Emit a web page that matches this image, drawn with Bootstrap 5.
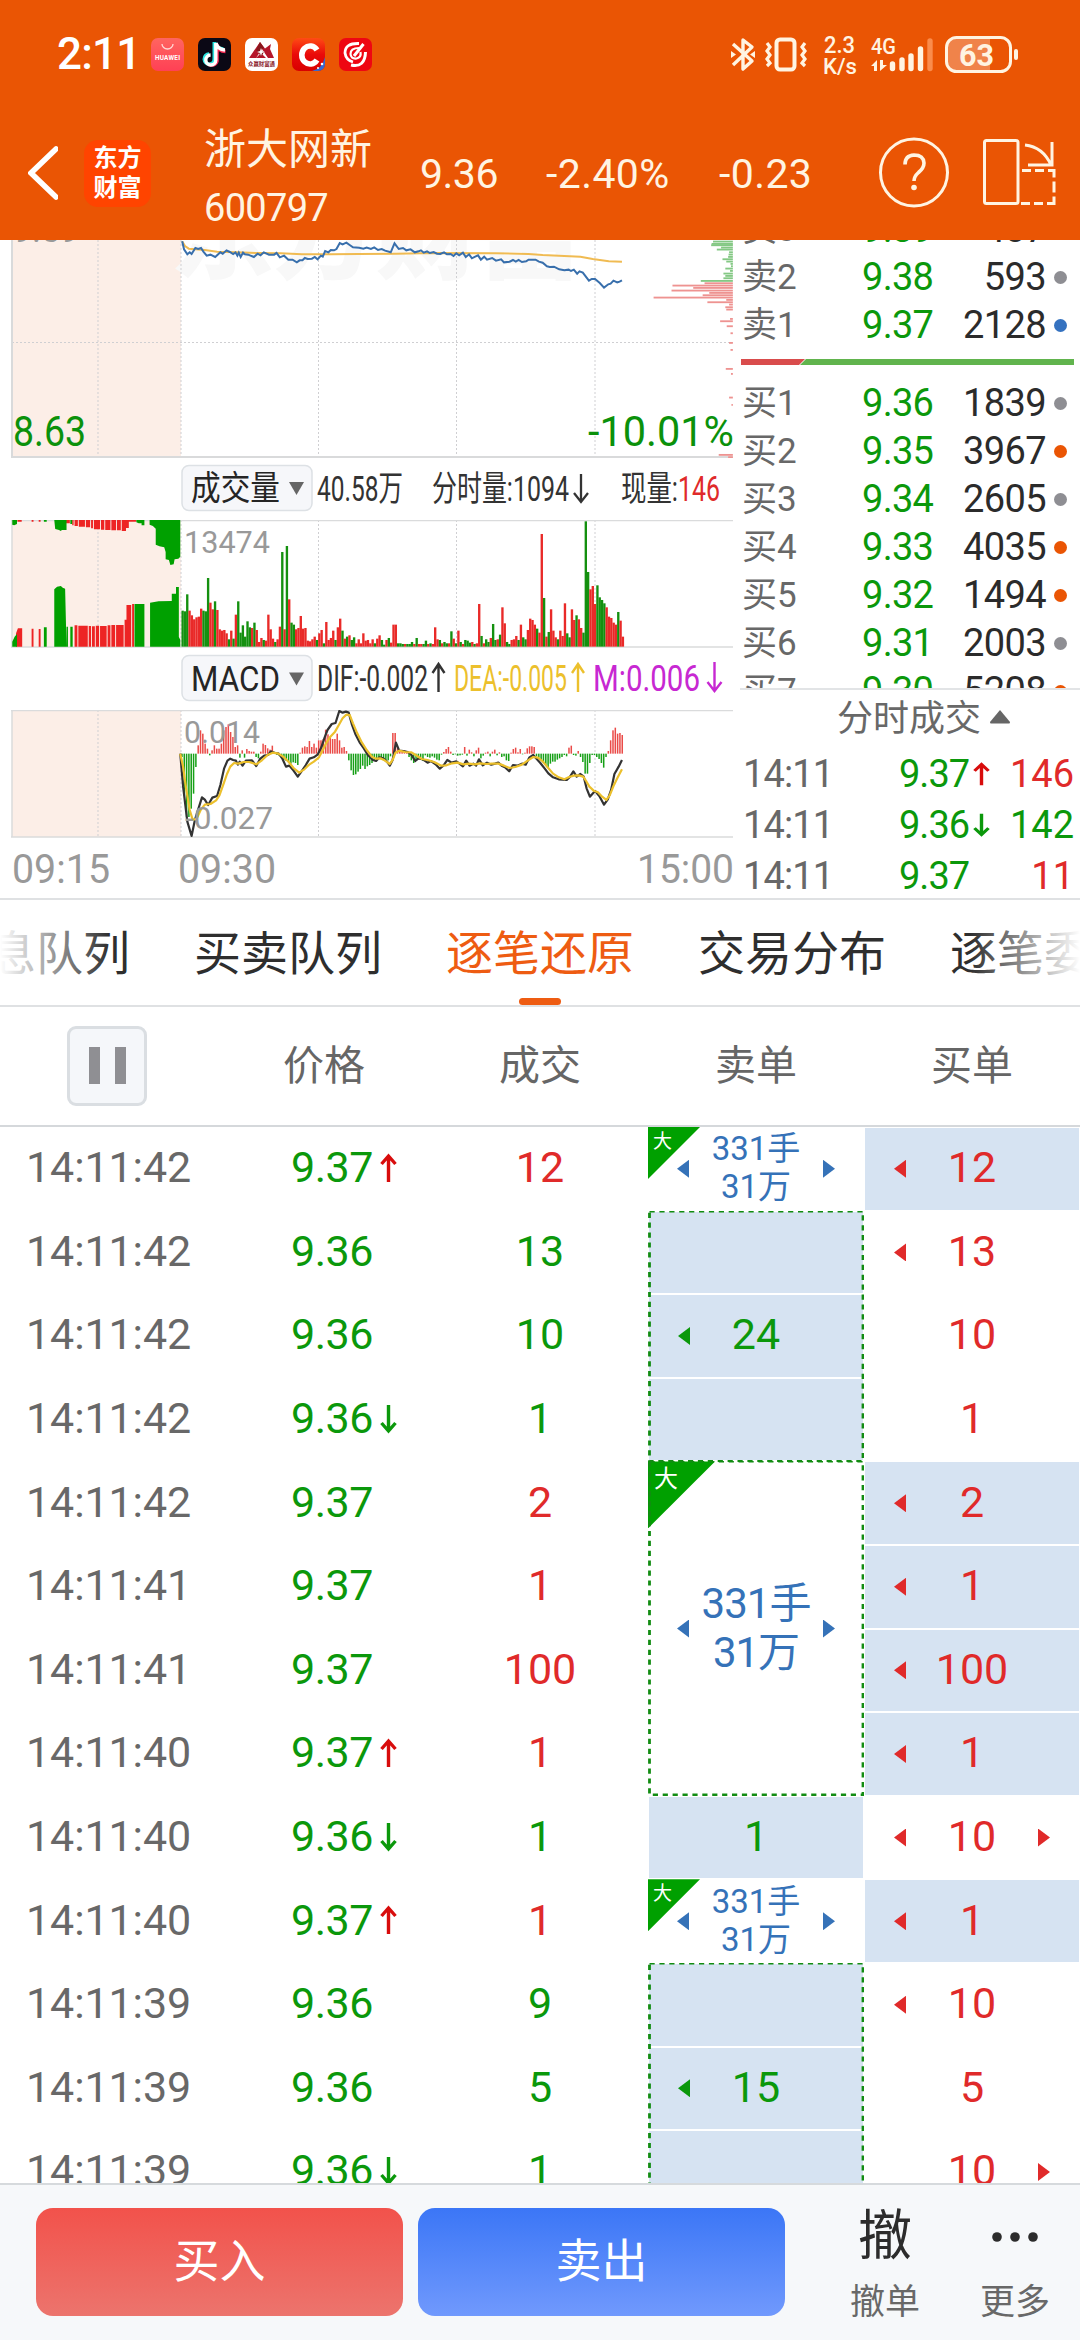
<!DOCTYPE html>
<html lang="zh-CN">
<head>
<meta charset="utf-8">
<meta name="viewport" content="width=device-width, initial-scale=1">
<title>浙大网新 600797</title>
<link rel="stylesheet" href="https://cdn.jsdelivr.net/npm/bootstrap@5.3.0/dist/css/bootstrap.min.css">
<style>
  :root { --orange:#ea5504; --up:#e02a2a; --down:#0b980b; --blue:#3572b8; --cell:#d6e3f2; --cream:#fff4e2; }
  body { font-family: Roboto, "Noto Sans CJK SC", sans-serif; width:1080px; height:2340px; overflow:hidden; color:#2b2b2b; background:#fff; line-height:1; }
  svg { display:block; flex:none; }
  .c-up { color:var(--up); } .c-down { color:var(--down); }
  .top-area { background:var(--orange); height:240px; color:var(--cream); }
  .status-row { height:108px; padding:0 0 0 57px; }
  .clock { font-size:44px; font-weight:500; color:#fff; width:94px; letter-spacing:-.8px; }
  .title-row { height:132px; padding-left:28px; }
  .brand-tile { width:67px; height:67px; border-radius:14px; background:#ff4400; color:#fff; font-size:24px; font-weight:700; line-height:30px; margin-left:26px; padding-top:3px; text-align:center; flex:none; margin-top:-2px; }
  .stock-name { width:216px; margin-left:53px; padding-top:3px; }
  .stock-name .zh { font-size:42px; line-height:56px; }
  .stock-name .code { font-size:38px; line-height:42px; letter-spacing:-.7px; margin-top:9px; }
  .quote { font-size:41px; letter-spacing:-.5px; flex:none; }
  .quote.signed { letter-spacing:.4px; }
  .market { height:660px; border-bottom:2px solid #dfe1e3; overflow:hidden; }
  .charts { width:740px; flex:none; }
  .side { width:340px; }
  .book { height:450px; overflow:hidden; border-bottom:2px solid #e2e4e6; }
  .book .first { margin-top:-35px; }
  .book-row { height:48px; padding:0 13px 0 2px; font-size:38px; }
  .book-row .lbl { font-size:35px; color:#686868; width:101px; }
  .book-row .prc { width:90px; text-align:right; letter-spacing:-.8px; }
  .book-row .qty { flex:1; text-align:right; letter-spacing:-.6px; }
  .spot { width:13px; height:13px; border-radius:50%; margin-left:8px; }
  .depth-bar { height:30px; padding:10px 6px 0 1px; }
  .ticks-head { height:58px; font-size:36px; color:#686868; padding-left:97px; }
  .tick-row { height:51px; font-size:38px; padding:0 6px 0 3px; }
  .tick-row .tm { color:#686868; width:156px; letter-spacing:-.9px; }
  .tick-row .prc { width:70px; letter-spacing:-1px; }
  .tabs { height:107px; border-bottom:2px solid #dfe1e3; gap:64px; margin:0; padding-left:0; overflow:hidden; position:relative; }
  .tabs .nav-link { padding:0; font-size:47px; line-height:107px; height:105px; color:#2e2e2e; white-space:nowrap; flex:none; position:relative; }
  .tabs .nav-link.active { color:#ee5c12; }
  .tabs .nav-link.active::after { content:""; position:absolute; left:50%; bottom:0; width:42px; height:7px; margin-left:-21px; border-radius:4px; background:#ee5c12; }
  .tabs .lead-tab { margin-left:-11px; }
  .fade-l, .fade-r { position:absolute; top:0; bottom:0; width:110px; pointer-events:none; }
  .fade-l { left:0; background:linear-gradient(90deg,#fff 0,rgba(255,255,255,0) 100%); }
  .fade-r { right:0; background:linear-gradient(270deg,#fff 0,rgba(255,255,255,0) 100%); }
  .cols-head { height:120px; border-bottom:2px solid #d5d8db; font-size:41px; color:#666; }
  .cols-head > div { width:216px; }
  .pause { width:80px; height:80px; border:3px solid #dadee2; border-radius:9px; background:#f5f7fa; margin-left:67px; gap:15px; margin-top:-1px; }
  .pause i { width:11px; height:37px; background:#8f8f93; }
  .ledger { height:1056px; overflow:hidden; font-size:43px; }
  .ledger > div { flex:none; }
  .deal { height:83.6px; padding-bottom:2px; }
  .deal .tm { width:291px; padding-left:26px; color:#686868; letter-spacing:-.1px; }
  .deal .prc { width:141px; letter-spacing:-.5px; }
  .deal .vol { width:216px; text-align:center; }
  .col-sell { width:216px; } .col-buy { width:216px; }
  .slot { height:83.6px; position:relative; border:1px solid #fff; padding-bottom:2px; }
  .slot.fill { background:var(--cell); background-clip:padding-box; }
  .group { position:relative; }
  .group > svg.dash { position:absolute; left:0; top:0; }
  .tri-l, .tri-r { position:absolute; top:50%; margin-top:-9px; width:12px; height:18px; background:currentColor; }
  .tri-l { left:29px; clip-path:polygon(100% 0,0 50%,100% 100%); }
  .tri-r { right:29px; clip-path:polygon(0 0,100% 50%,0 100%); }
  .big-order { color:var(--blue); position:relative; text-align:center; }
  .big-order.sm { height:83.6px; font-size:33px; line-height:38px; padding-bottom:1px; }
  .big-order.lg { height:334.4px; font-size:42px; line-height:49px; letter-spacing:-1px; padding-bottom:2px; }
  .corner { position:absolute; left:0; top:0; background:#00a000; color:#fff; clip-path:polygon(0 0,100% 0,0 100%); text-align:left; }
  .sm .corner { width:52px; height:52px; font-size:19px; line-height:19px; padding:5px 0 0 5px; }
  .lg .corner { width:67px; height:67px; font-size:24px; line-height:24px; padding:6px 0 0 6px; }
  .actions { height:157px; background:#f6f8fa; border-top:2px solid #d6dadd; padding:0 0 0 36px; }
  .trade-btn { width:367px; height:108px; border:0; border-radius:17px; font-size:46px; color:#fff; flex:none; margin-top:-2px; }
  .btn-buy { background:linear-gradient(#f2524b,#ec746d); margin-right:15px; }
  .btn-sell { background:linear-gradient(#3b76f6,#7099fd); }
  .mini { width:130px; font-size:35px; color:#686868; }
  .mini .glyph { height:62px; font-size:54px; color:#2c2c2c; margin-bottom:17px; }
</style>
</head>
<body>
<header class="top-area">
  <div class="status-row d-flex align-items-center">
    <div class="clock">2:11</div>
    <svg width="222" height="33" viewBox="0 0 222 33">
      <defs><linearGradient id="hw" x2="0" y2="1"><stop stop-color="#ff6560"/><stop offset="1" stop-color="#ff4055"/></linearGradient>
      <linearGradient id="cc" x2="0" y2="1"><stop stop-color="#ff4b14"/><stop offset=".5" stop-color="#ea0a0a"/><stop offset="1" stop-color="#d80000"/></linearGradient></defs>
      <rect width="33" height="33" rx="7" fill="url(#hw)"/><path d="M11 6a5.5 5 0 0 0 11 0" fill="none" stroke="#ffd9d4" stroke-width="1.3"/>
      <text x="4" y="21.5" font-size="6.4" font-weight="700" fill="#fff" textLength="25">HUAWEI</text>
      <g transform="translate(47)"><rect width="33" height="33" rx="7" fill="#0b0815"/>
        <g fill="none" stroke-width="3.600"><path d="M16.300 4v17a5 5 0 1 1-5.200-5M17 5q1.500 6 8.500 6" stroke="#2be3e0"/><path d="M19 6v17a5.500 5.500 0 0 1-8.500 3M19 7q1.500 6 8.500 6.500" stroke="#f72c55"/><path d="M17.800 5v17a5 5 0 1 1-5.200-5M18 5q1.500 6.500 9 7" stroke="#fff" stroke-width="3.400"/></g></g>
      <g transform="translate(94)"><rect width="33" height="33" rx="7" fill="#fff"/><path d="M4 20 15 4l5 6.500 6-4.500-1 5 4 9h-6l-6-9-6 9zM11 20l5-5 5 5z" fill="#b5162b"/><path d="m11 12 4-8 4 6-3 2 3 2-3 5-2-4z" fill="#88171d"/><path d="m12 14 3-1 1-3 1 3 3 1-3 1-1 3-1-3z" fill="#fff"/>
        <text x="3" y="28" font-size="6" font-weight="700" fill="#8c2430" textLength="27" lengthAdjust="spacingAndGlyphs">众赢财富通</text></g>
      <g transform="translate(141)"><clipPath id="r4"><rect width="33" height="33" rx="7"/></clipPath><g clip-path="url(#r4)"><rect width="33" height="33" fill="url(#cc)"/><path d="M20 33Q30 31 33 19v14z" fill="#3568cf"/></g><path d="M25 12A8.300 9 0 1 0 25 22" fill="none" stroke="#fff" stroke-width="5.600"/><circle cx="30" cy="26" r="1.300" fill="#fff"/><circle cx="26" cy="30" r="1" fill="#fff"/></g>
      <g transform="translate(188)"><rect width="33" height="33" rx="7" fill="#ee0612"/><g fill="none" stroke="#fff"><path d="M20 5.500Q6 5 6 15q1 7 8 9" stroke-width="2.800"/><path d="M20 10q-8.500 0-8.500 6 .5 5 6 4.500 5-1 4-6.500" stroke-width="2.200"/><path d="m24.500 6-9.500 12M12 27q14 3 14.500-13" stroke-width="3"/></g></g>
    </svg>
    <svg class="ms-auto" width="352" height="50" viewBox="728 28 352 50" fill="none" stroke="var(--cream)">
      <path d="m733 43 19 17-9 8V39l9 7-19 18" stroke-width="3.400" stroke-linejoin="round"/><path d="m731 50 5 3.500-5 3.500zM755 50l-5 3.500 5 3.500z" fill="var(--cream)" stroke="none"/>
      <rect x="776.500" y="38.500" width="18" height="30" rx="3.500" stroke-width="4"/><path d="m767 42 3 4-3 4 3 4-3 4 3 4-3 3M805 42l-3 4 3 4-3 4 3 4-3 4 3 3" stroke-width="3.200"/>
      <g fill="var(--cream)" stroke="none" font-weight="500"><text x="824" y="52" font-size="24" textLength="31" lengthAdjust="spacingAndGlyphs">2.3</text><text x="823" y="73" font-size="22" textLength="34" lengthAdjust="spacingAndGlyphs">K/s</text><text x="871" y="52.500" font-size="22" textLength="25" lengthAdjust="spacingAndGlyphs">4G</text>
      <path d="m871 65 6-6v11h-3v-5zM880 59h3v5h4l-7 6z"/></g>
      <g stroke-width="5.400" stroke-linecap="round"><path d="M892.500 63v4.500M902 59v8.500M911 55v12.500M920.500 48v19.500"/><path d="M930 40v27.500" stroke="#fa8c4c"/></g>
      <rect x="947" y="37.500" width="42" height="32" rx="9" fill="#f0834a" stroke="none"/><path d="M980 38h10v31h-10z" fill="#f0834a" stroke="none"/><rect x="946.500" y="36.500" width="64" height="34" rx="10" stroke-width="3"/><path d="M1016 50v7" stroke-width="4" stroke-linecap="round"/>
      <text x="959" y="64.500" font-size="32" font-weight="700" fill="var(--cream)" stroke="none" textLength="35" lengthAdjust="spacingAndGlyphs">63</text>
    </svg>
  </div>
  <div class="title-row d-flex align-items-center">
    <svg width="30" height="56" viewBox="0 0 30 56"><path d="M28 3 3 27l25 24" fill="none" stroke="#fff" stroke-width="5.500" stroke-linecap="round"/></svg>
    <div class="brand-tile">东方<br>财富</div>
    <div class="stock-name"><div class="zh">浙大网新</div><div class="code">600797</div></div>
    <div class="quote" style="width:126px">9.36</div><div class="quote signed" style="width:173px">-2.40%</div><div class="quote signed" style="width:159px">-0.23</div>
    <svg width="180" height="76" viewBox="877 136 180 76" fill="none" stroke="var(--cream)" stroke-width="3">
      <circle cx="913" cy="172.500" r="33.500"/><path d="M904 164.500q0-9 9-9.500 9.500 0 10 8 0 5-5.500 9.500-4.500 4-4.500 8.500" stroke-width="3.600"/><circle cx="913" cy="187.500" r="2.800" fill="var(--cream)" stroke="none"/>
      <rect x="983.500" y="140.500" width="33.500" height="63" rx="2"/><path d="M1024 145q18 2 26 20M1051 142v23h-24"/><path d="M1021 170.500h9m4 0h9m4 0h6v7m0 4v11m0 4v7h-7m-4 0h-9m-4 0h-9"/>
    </svg>
  </div>
</header>

<main>
  <section class="market d-flex">
    <div class="charts d-flex flex-column">
      <svg width="740" height="218" viewBox="0 240 740 218">
        <path d="M12 240h169v217H12z" fill="#fceee7"/>
        <text x="170" y="271" font-size="104" font-weight="900" fill="#f8f8f8" textLength="412">东方财富</text>
        <g stroke="#cfcfd2" stroke-width="1" stroke-dasharray="2 2"><path d="M98 240v217M181 240v217M318.500 240v217M456.500 240v217M595 240v217M12 342.500h721"/></g>
        <path d="M12 240v217M11 457h722" stroke="#d9dadb" stroke-width="2" fill="none"/>
        <text x="13" y="241.500" font-size="34" fill="#999" textLength="66" lengthAdjust="spacingAndGlyphs">9.59</text>
        <g transform="translate(0 230) scale(.4719 .3333)" fill="none" stroke-width="2">
          <polyline vector-effect="non-scaling-stroke" stroke="#f0bb52" points="386,34 392,48 400,56 414,58 434,60 460,65 500,67 545,69 595,70 640,73 700,73 760,72 840,71 920,69 1050,70 1120,72 1150,75 1230,80 1256,87 1290,94 1318,95"/>
          <polyline vector-effect="non-scaling-stroke" stroke="#386fac" points="386,34 390,58 397,73 402,67 406,72 414,54 420,57 426,54 431,65 438,77 446,74 456,81 467,67 472,71 480,61 487,66 494,72 499,67 503,77 506,68 510,81 515,68 519,73 526,74 538,81 546,71 552,76 559,67 570,74 581,74 586,69 593,82 602,77 611,89 620,89 629,97 635,91 641,91 646,84 652,87 661,86 667,81 673,88 680,77 684,80 689,63 696,67 701,60 708,61 713,57 720,39 726,43 734,38 741,45 748,52 761,53 770,56 777,53 786,57 793,52 801,60 809,57 816,62 828,67 836,40 845,57 854,54 861,61 870,58 879,67 887,64 892,61 898,68 905,64 911,69 919,66 926,71 933,72 941,67 947,73 955,72 961,78 967,70 973,76 981,68 987,81 994,73 1000,85 1007,80 1013,76 1019,89 1026,80 1032,89 1043,84 1051,92 1062,88 1068,97 1080,95 1087,90 1093,95 1099,90 1106,96 1115,94 1120,89 1135,89 1142,95 1150,98 1159,109 1165,111 1174,110 1185,118 1196,121 1205,119 1210,123 1216,119 1223,131 1228,124 1235,128 1248,152 1254,147 1261,147 1271,159 1280,173 1289,163 1294,161 1300,152 1308,157 1313,155 1318,151"/>
        </g>
        <g id="dist" transform="translate(0 230) scale(.4719 .3333)"></g>
        <g fill="#0b910b" font-size="42"><text x="13" y="446" textLength="73" lengthAdjust="spacingAndGlyphs">8.63</text><text x="588" y="446" textLength="146" lengthAdjust="spacingAndGlyphs">-10.01%</text></g>
      </svg>
      <svg width="740" height="62" viewBox="0 458 740 62">
        <rect x="182" y="465.500" width="130" height="45" rx="7" fill="#f6f7fa" stroke="#dde1e5" stroke-width="1.500"/>
        <text x="191" y="500" font-size="34" fill="#252525" textLength="89" lengthAdjust="spacingAndGlyphs">成交量</text><path d="M289 482h15l-7.500 13z" fill="#666"/>
        <g font-size="35" fill="#333"><text x="317" y="500.500" textLength="86" lengthAdjust="spacingAndGlyphs">40.58万</text><text x="432" y="500.500" textLength="137" lengthAdjust="spacingAndGlyphs">分时量:1094</text><text x="621" y="500.500" textLength="57" lengthAdjust="spacingAndGlyphs">现量:</text><text x="678" y="500.500" fill="#e02a2a" textLength="42" lengthAdjust="spacingAndGlyphs">146</text></g>
        <path d="M581 474v28m-7-9 7 9 7-9" fill="none" stroke="#333" stroke-width="2.300"/>
      </svg>
      <svg width="740" height="128" viewBox="0 520 740 128">
        <path d="M12 520h169v127H12z" fill="#fceee7"/>
        <path d="M98 520v127M181 520v127M318.500 520v127M456.500 520v127M595 520v127" stroke="#cfcfd2" stroke-dasharray="2 2"/>
        <path d="M12 520v127M11 520.500h722M11 647h722" stroke="#dadbdc" stroke-width="1.500" fill="none"/>
        <text x="184" y="553" font-size="31" fill="#999" textLength="86" lengthAdjust="spacingAndGlyphs">13474</text>
        <g transform="translate(0 460) scale(.4719 .3333)">
          <path fill="#ed2424" d="M37 180h9v5h-9zM67 180h4v5h-4zM82 180h4v5h-4zM140 180h8v10h-8zM153 180h3v16h-3zM158 180h7v18h-7zM167 180h13v20h-13zM182 180h9v22h-9zM193 180h4v25h-4zM199 180h13v28h-13zM214 180h7v29h-7zM223 180h11v30h-11zM236 180h10v31h-10zM248 180h8v31h-8zM258 180h9v33h-9zM267 180h6v24h-6zM273 180h16v5h-16zM34 560v-40l4-15h9v55zM67 560v-54h4v54zM82 560v-53h4v53zM158 560v-64h6v64zM166 560v-63h20v63zM188 560v-62h5v62zM195 560v-61h6v61zM203 560v-63h7v63zM212 560v-62h14v62zM228 560v-64h6v64zM236 560v-65h8v65zM246 560v-65h16v65zM264 560v-81h4v-44h10v125zM280 560v-128h4v128z"/>
          <path fill="#00a000" d="M26 180h10v12l-6 4-4-2zM93 180h6v5h-6zM115 180h26v30h-10l-2 3-4-3-8-3zM149 180h4v12h-4zM289 180h11v10h-6l-5-3zM300 180h6v16h-6zM317 180h65v110l-4 6-8 2-2 15-7 2-3-15-7-2v-22l-3-14-10-3-8-5v-48l-6-8-7-4zM26 560v-15l5-15 5-8v38zM93 560v-58h6v58zM115 560v-172l6-8 8-2 4 5 5 3 3 174zM149 560v-60h5v60zM141 560v-60h3v60zM285 560v-128h21v128zM318 560v-132l18-4 28-1v-22h9v-20h6v150l3 8v21z"/>
          <g id="volbars"></g>
        </g>
      </svg>
      <svg width="740" height="62" viewBox="0 648 740 62">
        <rect x="182" y="655.500" width="130" height="45" rx="7" fill="#f6f7fa" stroke="#dde1e5" stroke-width="1.500"/>
        <text x="191" y="691" font-size="35.500" fill="#252525" textLength="89" lengthAdjust="spacingAndGlyphs">MACD</text><path d="M289 672.500h15l-7.500 13z" fill="#666"/>
        <g font-size="36"><text x="317" y="691" fill="#333" textLength="111" lengthAdjust="spacingAndGlyphs">DIF:-0.002</text><text x="454" y="691" fill="#ecc02c" textLength="113" lengthAdjust="spacingAndGlyphs">DEA:-0.005</text><text x="593" y="691" fill="#c728d2" textLength="107" lengthAdjust="spacingAndGlyphs">M:0.006</text></g>
        <g fill="none" stroke-width="2.400"><path d="M438.500 692v-28m-6 9 6-9 6 9" stroke="#333"/><path d="M578 692v-28m-6 9 6-9 6 9" stroke="#ecc02c"/><path d="M714.500 662v29m-7-9 7 9 7-9" stroke="#c728d2"/></g>
      </svg>
      <svg width="740" height="128" viewBox="0 710 740 128">
        <path d="M12 710h169v127H12z" fill="#fceee7"/>
        <path d="M98 710v127M181 710v127M318.500 710v127M456.500 710v127M595 710v127" stroke="#cfcfd2" stroke-dasharray="2 2"/>
        <path d="M12 710v127M11 710.500h722M11 837h722" stroke="#dadbdc" stroke-width="1.500" fill="none"/>
        <g transform="translate(0 650) scale(.4719 .3333)"><g id="macdbars"></g>
          <g fill="none" stroke-width="2.200" stroke-linejoin="round">
          <polyline vector-effect="non-scaling-stroke" stroke="#333" points="382,311 388,410 397,515 406,558 413,510 420,478 428,442 434,449 441,465 450,443 460,438 467,405 475,355 482,332 488,326 494,330 500,332 504,344 508,335 514,347 521,332 534,331 543,348 551,327 560,317 568,315 574,304 583,309 590,310 598,325 606,350 613,347 622,362 631,380 639,364 648,345 656,326 665,322 673,314 681,292 688,262 694,240 703,222 711,219 719,183 726,188 733,185 739,188 746,225 753,252 762,277 771,295 780,316 790,330 797,333 804,322 812,325 820,335 826,347 832,330 839,278 846,302 855,303 864,306 872,315 880,333 887,325 896,328 906,338 913,333 923,343 932,356 940,346 948,330 957,338 967,334 973,340 981,349 988,332 995,347 1003,341 1009,347 1015,328 1023,346 1032,338 1041,344 1049,341 1056,338 1063,347 1070,352 1079,364 1087,345 1096,347 1106,341 1114,344 1122,322 1130,315 1136,325 1145,339 1154,355 1162,370 1172,382 1184,388 1201,390 1207,382 1215,364 1222,380 1230,372 1237,380 1243,415 1250,440 1261,423 1270,438 1280,464 1288,448 1295,420 1302,372 1311,350 1318,330"/>
          <polyline vector-effect="non-scaling-stroke" stroke="#ecc02c" points="382,311 388,350 394,412 402,480 408,508 416,508 426,478 434,464 446,462 458,451 465,436 473,405 481,372 488,350 496,339 505,341 516,336 528,336 543,343 555,331 567,315 578,308 590,311 600,320 612,336 622,354 634,368 645,358 656,343 665,335 676,322 683,303 691,280 700,260 710,245 718,225 726,205 734,194 741,195 748,220 757,250 767,278 777,300 788,320 797,326 806,325 815,331 826,342 832,330 838,308 846,302 858,306 872,307 884,318 894,327 906,330 920,336 935,347 946,346 958,340 970,338 982,343 994,341 1006,343 1018,340 1030,342 1042,341 1056,341 1068,347 1080,354 1092,351 1106,344 1118,332 1130,321 1140,323 1150,334 1160,351 1172,371 1184,382 1196,388 1206,381 1216,377 1226,376 1236,380 1242,393 1249,410 1258,422 1267,427 1276,440 1285,450 1292,436 1300,408 1308,385 1318,358"/></g>
        </g>
        <g font-size="31" fill="#999"><text x="184" y="743" textLength="76" lengthAdjust="spacingAndGlyphs">0.014</text><text x="185" y="829" textLength="88" lengthAdjust="spacingAndGlyphs">-0.027</text></g>
      </svg>
      <svg width="740" height="60" viewBox="0 838 740 60"><g font-size="40" fill="#999"><text x="12" y="882.500" textLength="98" lengthAdjust="spacingAndGlyphs">09:15</text><text x="178" y="882.500" textLength="98" lengthAdjust="spacingAndGlyphs">09:30</text><text x="637" y="882.500" textLength="97" lengthAdjust="spacingAndGlyphs">15:00</text></g></svg>
    </div>
    <aside class="side">
      <div class="book" id="book"></div>
      <div class="ticks-head d-flex align-items-center">分时成交<svg class="ms-2 mb-1" width="22" height="16" viewBox="0 0 22 16"><path d="M11 1 21 13q0 1.500-1 1.500H2Q1 14.500 1 13z" fill="#666"/></svg></div>
      <div id="ticks"></div>
    </aside>
  </section>

  <nav class="tabs nav flex-nowrap">
    <a class="nav-link lead-tab">息队列</a><a class="nav-link">买卖队列</a><a class="nav-link active">逐笔还原</a><a class="nav-link">交易分布</a><a class="nav-link">逐笔委托</a>
    <span class="fade-l"></span><span class="fade-r"></span>
  </nav>
  <div class="cols-head d-flex align-items-center text-center">
    <div><div class="pause d-flex align-items-center justify-content-center"><i></i><i></i></div></div>
    <div>价格</div><div>成交</div><div>卖单</div><div>买单</div>
  </div>
  <section class="ledger d-flex">
    <div id="deals"></div>
    <div class="col-sell" id="sells"></div>
    <div class="col-buy" id="buys"></div>
  </section>
</main>
<footer class="actions d-flex align-items-center">
  <button class="btn trade-btn btn-buy">买入</button><button class="btn trade-btn btn-sell">卖出</button>
  <div class="mini text-center ms-auto"><div class="glyph d-flex align-items-center justify-content-center">撤</div>撤单</div>
  <div class="mini text-center"><div class="glyph d-flex align-items-center justify-content-center"><svg width="50" height="14" viewBox="0 0 50 14" fill="#2c2c2c"><circle cx="7" cy="7" r="4.800"/><circle cx="25" cy="7" r="4.800"/><circle cx="43" cy="7" r="4.800"/></svg></div>更多</div>
</footer>
<script src="https://cdn.jsdelivr.net/npm/bootstrap@5.3.0/dist/js/bootstrap.bundle.min.js"></script>
<script>
const $ = id => document.getElementById(id);
const arrow = (d, h, w) => d ? `<svg width="17" height="${h}" viewBox="0 0 17 30" preserveAspectRatio="none" style="margin-left:${w}px"><path d="${d === 'u' ? 'M8.500 29V3M1.500 11l7-8 7 8' : 'M8.500 1v26M1.500 19l7 8 7-8'}" fill="none" stroke="${d === 'u' ? '#d80c0c' : '#0b980b'}" stroke-width="3.400"/></svg>` : '';

// order book
const grey = '#8e8e93', org = '#ea5504', blu = '#3572c0';
const bookRow = ([l, p, q, c], i) => `<div class="book-row d-flex align-items-center ${i === 0 ? 'first' : ''}"><span class="lbl">${l}</span><span class="prc c-down">${p}</span><span class="qty">${q}</span><span class="spot" style="background:${c}"></span></div>`;
$('book').innerHTML = [['卖3','9.39','487',grey],['卖2','9.38','593',grey],['卖1','9.37','2128',blu]].map(bookRow).join('')
 + `<div class="depth-bar"><svg width="333" height="6"><path d="M0 0h64l-6 6H0z" fill="#d94c4c"/><path d="M65 0h268v6H59z" fill="#61b44d"/></svg></div>`
 + [['买1','9.36','1839',grey],['买2','9.35','3967',org],['买3','9.34','2605',grey],['买4','9.33','4035',org],['买5','9.32','1494',org],['买6','9.31','2003',grey],['买7','9.30','5208',org]].map((r, i) => bookRow(r, i + 1)).join('');
$('ticks').innerHTML = [['9.37','u','146','up'],['9.36','d','142','down'],['9.37','','11','up']].map(([p, a, q, c]) =>
  `<div class="tick-row d-flex align-items-center"><span class="tm">14:11</span><span class="prc c-down">${p}</span>${arrow(a, 24, 4)}<span class="ms-auto c-${c}">${q}</span></div>`).join('');

// deal list
$('deals').innerHTML = [['42','9.37','u','12','up'],['42','9.36','','13','down'],['42','9.36','','10','down'],['42','9.36','d','1','down'],['42','9.37','','2','up'],['41','9.37','','1','up'],['41','9.37','','100','up'],['40','9.37','u','1','up'],['40','9.36','d','1','down'],['40','9.37','u','1','up'],['39','9.36','','9','down'],['39','9.36','','5','down'],['39','9.36','d','1','down']].map(([s, p, a, v, c]) =>
  `<div class="deal d-flex align-items-center"><span class="tm">14:11:${s}</span><span class="prc c-down d-flex align-items-center">${p}${arrow(a, 30, 7)}</span><span class="vol c-${c}">${v}</span></div>`).join('');
const slot = (v, fill, l, r, c) => `<div class="slot d-flex align-items-center justify-content-center ${fill ? 'fill' : ''} c-${c}">${l ? '<i class="tri-l"></i>' : ''}${v}${r ? '<i class="tri-r"></i>' : ''}</div>`;
const order = s => `<div class="big-order ${s} d-flex flex-column justify-content-center"><span class="corner">大</span><i class="tri-l"></i><div>331手</div><div>31万</div><i class="tri-r"></i></div>`;
const group = (n, inner) => `<div class="group">${inner}<svg class="dash" width="217" height="${n * 83.6 + 1}"><rect x="1.500" y="0" width="213.500" height="${n * 83.6 - .5}" fill="none" stroke="#128c12" stroke-width="2.800" stroke-dasharray="5.200 4.700"/></svg></div>`;
$('sells').innerHTML = order('sm') + group(3, slot('',1,0,0,'down') + slot('24',1,1,0,'down') + slot('',1,0,0,'down')) + group(4, order('lg'))
 + slot('1',1,0,0,'down') + order('sm') + group(3, slot('',1,0,0,'down') + slot('15',1,1,0,'down') + slot('',1,0,0,'down'));
$('buys').innerHTML = [['12',1,1,0],['13',0,1,0],['10',0,0,0],['1',0,0,0],['2',1,1,0],['1',1,1,0],['100',1,1,0],['1',1,1,0],['10',0,1,1],['1',1,1,0],['10',0,1,0],['5',0,0,0],['10',0,0,1]].map(a => slot(...a, 'up')).join('');

// volume bars: colour letter + height
const vol = 'g108 g106 g157 r108 r94 r82 r88 r90 r114 g108 g106 g206 r132 r112 g136 r110 r52 r48 r50 r40 g22 r48 g24 r96 g136 g42 g64 g30 g76 g58 r56 g72 r50 r14 r26 g20 r18 r96 r52 r24 g14 r22 r60 g284 r52 g302 r142 g72 g66 r52 r56 r92 r54 r56 r18 r16 r22 r30 g20 r40 r50 g10 r74 r20 r26 r48 g20 r58 r84 g48 r24 g30 r34 g20 g28 r10 r22 r10 r40 r18 r20 r10 r22 g10 r24 r34 g20 g6 r20 g26 r12 r66 r66 g10 g10 g8 r8 g8 g8 g14 r8 g26 r8 r8 g8 g18 r8 g10 r8 r58 r22 g20 r10 g14 g10 r10 g46 r24 g10 r48 g14 r8 g20 g18 g12 r14 g8 r10 r128 g32 r10 g22 g14 r26 g68 g20 r22 g36 r118 r70 g14 g8 r20 r22 r32 g20 r66 g28 g22 r50 r84 r80 r66 g54 r42 r338 g146 r30 g44 r112 r48 r28 g22 r48 r32 r130 g40 g28 r112 r80 g94 r82 r56 g42 g376 g224 r172 r182 r128 g184 g148 g140 g130 r118 r90 r86 r72 r66 g104 r78 r30'.split(' ');
$('volbars').innerHTML = vol.map((t, i) => { const h = +t.slice(1), x = 384.500 + i * 933 / (vol.length - 1); return `<rect x="${x.toFixed(1)}" y="${560 - h}" width="5" height="${h}" fill="${t[0] === 'r' ? '#e92a28' : '#14900f'}"/>`; }).join('');

// MACD histogram
const hist = [-10,-125,-190,-190,-165,-120,-40,25,70,60,30,15,-5,10,25,15,15,30,70,80,88,65,50,20,25,-12,10,-12,14,8,6,6,-10,-14,6,30,26,16,12,24,5,-4,-6,-10,-18,-22,-26,-30,-26,-28,-34,3,18,22,20,38,20,30,18,40,40,44,72,58,50,44,44,60,40,18,20,8,-20,-50,-64,-62,-54,-46,-36,-46,-38,-34,-28,-22,-18,-12,-14,-20,-25,-20,-8,62,62,20,10,10,10,6,-10,-20,-28,-20,-16,-10,-22,-5,-10,-12,-8,-12,-18,-20,-3,5,14,20,6,-4,-2,-6,-5,-3,20,-6,12,4,-8,10,18,-14,-6,3,6,-8,6,12,-5,4,-10,-8,-20,-22,3,14,18,4,14,-2,3,16,22,22,20,-8,-12,-20,-28,-34,-40,-30,-24,-24,-18,-14,-10,-4,-8,18,24,-4,-6,8,-10,-25,-60,-60,-28,-4,-4,-10,-16,-28,-42,-10,8,40,70,78,60,62,56];
$('macdbars').innerHTML = hist.map((v, i) => `<rect x="${(384 + i * 933 / (hist.length - 1)).toFixed(1)}" y="${v > 0 ? 311 - v : 311}" width="3.200" height="${Math.abs(v)}" fill="${v > 0 ? '#ea4b48' : '#17a017'}"/>`).join('');

// price distribution, [y, length, colour]
const dist = [[34,42],[41,45],[45,46],[52,25],[58,34],[66,8],[73,9],[80,10],[87,22],[94,14],[101,5],[108,4],[115,16],[122,6],[130,20],[137,16],[144,20],[152,68],[159,60,1],[166,128,1],[173,84,1],[181,130,1],[188,50,1],[195,64,1],[202,168,1],[209,14,1],[216,54,1],[223,8,1],[231,16,1],[238,14,1],[266,6,1],[273,27,1],[288,13,1],[309,5,1],[338,8,1],[359,5,1],[416,15,1],[431,4,1],[502,8,1],[524,3,1],[674,30,1],[681,10,1]];
$('dist').innerHTML = dist.map(([y, w, r]) => `<rect x="${1553 - w}" y="${y - 2}" width="${w}" height="5.500" fill="${r ? '#ee9391' : '#84c884'}"/>`).join('');
</script>
</body>
</html>
